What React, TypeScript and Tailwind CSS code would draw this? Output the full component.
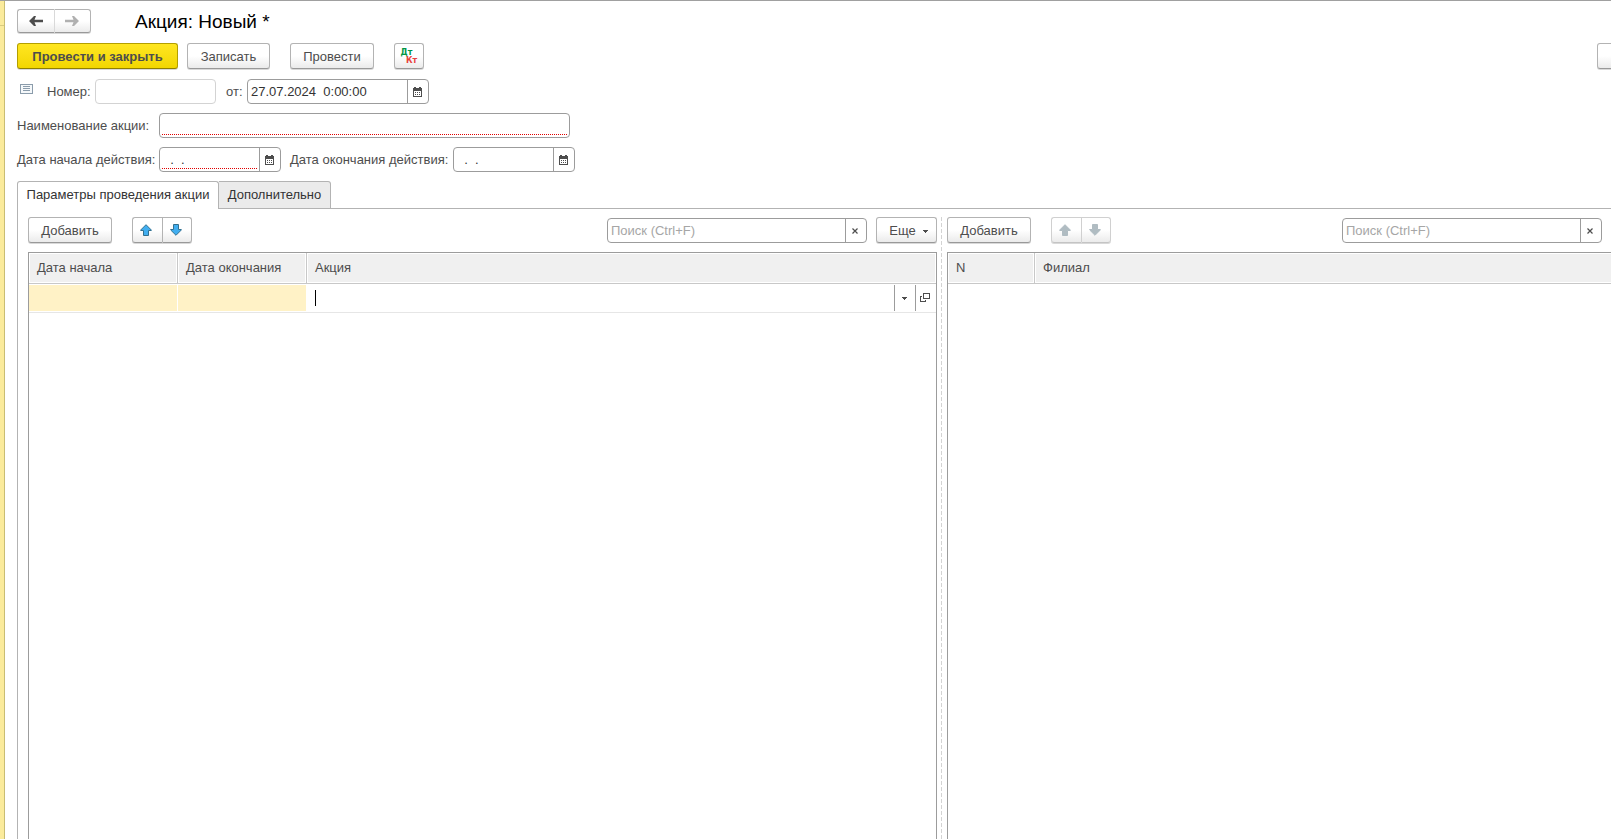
import type { JSX, ReactNode } from 'react'
import { useState } from 'react'
import clsx from 'clsx'

const BUTTON =
  'flex items-center justify-center border border-[#b3b3b3] border-b-[#999999] bg-linear-to-b from-white from-50% to-[#ebebeb] text-[#4d4d4d] shadow-[0_1px_0_#d9d9d9]'
const FIELD = 'flex h-[25px] rounded border border-[#9c9c9c] bg-white'
const FIELD_BUTTON = 'flex w-[21px] items-center justify-center border-l border-[#9c9c9c] pr-[2px]'

interface IconProps {
  className?: string
}

function NavArrow({ className }: IconProps): JSX.Element {
  return (
    <svg width="14" height="10" viewBox="0 0 14 10" className={className} fill="currentColor">
      <path d="M0 5 L5 0 H7 L5.5 3.7 H14 V6.3 H5.5 L7 10 H5 Z" />
    </svg>
  )
}

function MoveArrow({ className }: IconProps): JSX.Element {
  return (
    <svg width="12" height="12" viewBox="0 0 12 12" className={className} strokeWidth="1" strokeLinejoin="round">
      <path d="M6 0.7 L11.3 6 V6.5 H8.5 V11.5 H3.5 V6.5 H0.7 V6 Z" />
    </svg>
  )
}

function CalendarIcon(): JSX.Element {
  return (
    <svg width="9" height="10" viewBox="0 0 9 10" fill="#4d4d4d" shapeRendering="crispEdges">
      <path d="M1 0h2v1h3V0h2v1h1v9H0V1h1zM1 4v5h7V4z" fillRule="evenodd" />
      <path d="M2 5h1v1H2zM4 5h1v1H4zM6 5h1v1H6zM2 7h1v1H2zM4 7h1v1H4zM6 7h1v1H6z" />
    </svg>
  )
}

function ListIcon(): JSX.Element {
  return (
    <svg width="13" height="10" viewBox="0 0 13 10" shapeRendering="crispEdges">
      <rect x="0.5" y="0.5" width="12" height="9" fill="#f5f8fa" stroke="#8b9cab" />
      <path d="M3 2.5h7M3 4.5h7M3 6.5h7" stroke="#8b9cab" />
    </svg>
  )
}

function ClearIcon(): JSX.Element {
  return (
    <svg width="6" height="6" viewBox="0 0 6 6" stroke="#4d4d4d" strokeWidth="1.2">
      <path d="M0.5 0.5 L5.5 5.5 M5.5 0.5 L0.5 5.5" />
    </svg>
  )
}

function CaretIcon(): JSX.Element {
  return (
    <svg width="5" height="3" viewBox="0 0 5 3" fill="#4d4d4d" shapeRendering="crispEdges">
      <path d="M0 0h5v1H4v1H3v1H2V2H1V1H0z" />
    </svg>
  )
}

function OpenIcon(): JSX.Element {
  return (
    <svg width="10" height="10" viewBox="0 0 10 10" fill="none" stroke="#4d4d4d" shapeRendering="crispEdges">
      <path d="M3.5 0.5h6v5h-6z M2 3.5H0.5v5h5V7" />
    </svg>
  )
}

interface ButtonProps {
  children?: ReactNode
  className?: string
  label?: string
}

function Button({ children, className, label }: ButtonProps): JSX.Element {
  return (
    <button type="button" aria-label={label} className={clsx(BUTTON, 'h-[26px] shrink-0 rounded-[3px] pt-[2px]', className)}>
      {children}
    </button>
  )
}

interface DateFieldProps {
  id: string
  value: string
  className: string
  required?: boolean
}

function DateField({ id, value, className, required }: DateFieldProps): JSX.Element {
  const [text, setText] = useState(value)
  return (
    <div className={clsx(FIELD, className)}>
      <div className="min-w-0 flex-1 px-[2px]">
        <input
          id={id}
          value={text}
          onChange={(e) => { setText(e.target.value) }}
          className={clsx(
            'block h-[21px] w-full whitespace-pre px-px pt-[2px] text-[#333333] outline-none',
            required && 'border-b border-dotted border-[#e00000]'
          )}
        />
      </div>
      <button type="button" aria-label="Выбрать" className={FIELD_BUTTON}>
        <CalendarIcon />
      </button>
    </div>
  )
}

function SearchField(): JSX.Element {
  return (
    <div className={clsx(FIELD, 'w-[260px] shrink-0')}>
      <input
        aria-label="Поиск"
        placeholder="Поиск (Ctrl+F)"
        className="min-w-0 flex-1 px-[3px] outline-none placeholder:text-[#a6a6a6]"
      />
      <button type="button" aria-label="Очистить" className={FIELD_BUTTON}>
        <ClearIcon />
      </button>
    </div>
  )
}

function MoveButtons({ disabled = false }: { disabled?: boolean }): JSX.Element {
  const icon = disabled ? 'fill-[#b0bcc2] stroke-[#b0bcc2]' : 'fill-[#41aef0] stroke-[#32708f]'
  const border = disabled && 'border-[#d0d0d0] border-b-[#c4c4c4]'
  return (
    <div className="flex">
      <button type="button" aria-label="Вверх" disabled={disabled} className={clsx(BUTTON, 'h-[26px] w-[30px] rounded-l-[3px] border-r-0 pr-[3px]', border)}>
        <MoveArrow className={icon} />
      </button>
      <button type="button" aria-label="Вниз" disabled={disabled} className={clsx(BUTTON, 'h-[26px] w-[30px] rounded-r-[3px] pr-[3px]', border)}>
        <MoveArrow className={clsx(icon, 'rotate-180')} />
      </button>
    </div>
  )
}

function HeaderCell({ children, className }: { children: ReactNode; className?: string }): JSX.Element {
  return (
    <th
      scope="col"
      className={clsx(
        'h-[31px] border-b border-[#c8c8c8] bg-[#f0f0f0] px-[8px] text-left font-normal shadow-[inset_0_0_0_1px_#ffffff]',
        className
      )}
    >
      {children}
    </th>
  )
}

export default function App(): JSX.Element {
  return (
    <div className="flex h-screen overflow-hidden border-t border-[#a0a0a0] bg-white font-['Liberation_Sans',Arial,sans-serif] text-[13px] text-[#4d4d4d]">
      {/* Edge of the sections panel */}
      <div className="w-[5px] shrink-0 border-r border-[#c9bd73] bg-[#fbeb9c]">
        <div className="h-[25px] border-b border-[#d9cb80]" />
      </div>

      <main className="flex min-w-0 flex-1 flex-col pl-[12px] pt-[8px]">
        <header className="flex h-[24px] items-center">
          <button type="button" aria-label="Назад" className={clsx(BUTTON, 'h-[24px] w-[37px] rounded-l-[3px] border-r-0')}>
            <NavArrow />
          </button>
          <button type="button" aria-label="Вперед" className={clsx(BUTTON, 'h-[24px] w-[37px] rounded-r-[3px] border-l-[#d9d9d9] pr-[2px]')}>
            <NavArrow className="rotate-180 text-[#b0b0b0]" />
          </button>
          <h1 className="ml-[44px] pt-[2px] text-[19px] leading-[22px] text-black">Акция: Новый *</h1>
        </header>

        <div className="mt-[10px] flex">
          <button
            type="button"
            className="h-[26px] w-[161px] rounded-[3px] border border-[#b39f00] border-b-[#8f7f00] bg-linear-to-b from-[#ffe61f] to-[#f2d600] pt-[2px] font-bold text-[#4d4d4d] shadow-[0_1px_0_#d9d9d9]"
          >
            Провести и закрыть
          </button>
          <Button className="ml-[9px] w-[83px]">Записать</Button>
          <Button className="ml-[20px] w-[84px]">Провести</Button>
          <Button className="ml-[20px] w-[30px] flex-col font-['DejaVu_Sans',sans-serif] text-[8px] leading-[8px] font-bold">
            <span className="pr-[5px] text-[#009646]">Дт</span>
            <span className="pl-[5px] text-[#e8413c]">Кт</span>
          </Button>
          <Button label="Еще" className="-mr-[47px] ml-auto w-[61px]" />
        </div>

        <div className="mt-[10px] flex items-center">
          <div className="w-[30px] pb-[5px] pl-[3px]">
            <ListIcon />
          </div>
          <label htmlFor="number" className="w-[48px]">Номер:</label>
          <input id="number" className="h-[25px] w-[121px] rounded border border-[#d3d3d3] px-[3px] outline-none" />
          <label htmlFor="date" className="ml-[10px] w-[21px]">от:</label>
          <DateField id="date" value="27.07.2024  0:00:00" className="w-[182px]" />
        </div>

        <div className="mt-[9px] flex items-center">
          <label htmlFor="name" className="w-[142px]">Наименование акции:</label>
          <div className={clsx(FIELD, 'w-[411px] px-[2px]')}>
            <input id="name" className="h-[21px] w-full border-b border-dotted border-[#e00000] outline-none" />
          </div>
        </div>

        <div className="mt-[9px] flex items-center">
          <label htmlFor="start" className="w-[142px]">Дата начала действия:</label>
          <DateField id="start" value="  .  ." className="w-[122px]" required />
          <label htmlFor="end" className="ml-[9px] w-[163px]">Дата окончания действия:</label>
          <DateField id="end" value="  .  ." className="w-[122px]" />
        </div>

        <div role="tablist" className="mt-[9px] flex h-[28px] text-[#333333]">
          <button type="button" role="tab" aria-selected="true" className="w-[202px] rounded-t-[3px] border border-b-0 border-[#b3b3b3] pb-[2px]">
            Параметры проведения акции
          </button>
          <button type="button" role="tab" aria-selected="false" className="w-[112px] rounded-tr-[3px] border border-l-0 border-[#b3b3b3] bg-[#ebebeb]">
            Дополнительно
          </button>
          <div className="flex-1 border-b border-[#b3b3b3]" />
        </div>

        <div className="grid min-h-0 flex-1 grid-cols-[909fr_10px_664fr] border-l border-[#b3b3b3] pl-[10px] pt-[8px]">
          <section className="flex min-w-0 flex-col">
            <div className="flex">
              <Button className="mr-[20px] w-[84px]">Добавить</Button>
              <MoveButtons />
              <div className="ml-auto flex items-end gap-[9px]">
                <SearchField />
                <Button className="w-[61px] gap-[7px] pl-[4px]">
                  Еще
                  <CaretIcon />
                </Button>
              </div>
            </div>
            <div className="mt-[9px] flex-1 border border-b-0 border-[#9c9c9c]">
              <table className="w-full table-fixed border-separate border-spacing-0">
                <thead>
                  <tr>
                    <HeaderCell className="w-[149px] border-r">Дата начала</HeaderCell>
                    <HeaderCell className="w-[129px] border-r">Дата окончания</HeaderCell>
                    <HeaderCell>Акция</HeaderCell>
                  </tr>
                </thead>
                <tbody>
                  <tr>
                    <td className="border-b border-[#e6e6e6] bg-[#fff2c6] shadow-[inset_-1px_0_0_#ffffff,inset_0_1px_0_#ffffff,inset_0_-1px_0_#ffffff]" />
                    <td className="border-b border-[#e6e6e6] bg-[#fff2c6] shadow-[inset_-1px_0_0_#ffffff,inset_0_1px_0_#ffffff,inset_0_-1px_0_#ffffff]" />
                    <td className="border-b border-[#e6e6e6] p-0">
                      <div className="flex h-[28px] items-center py-px">
                        <div className="ml-[8px] h-[16px] w-px bg-black" />
                        <input aria-label="Акция" className="min-w-0 flex-1 outline-none" />
                        <button type="button" aria-label="Выбрать из списка" className={clsx(FIELD_BUTTON, 'h-[26px]')}>
                          <CaretIcon />
                        </button>
                        <button type="button" aria-label="Открыть" className={clsx(FIELD_BUTTON, 'h-[26px]')}>
                          <OpenIcon />
                        </button>
                      </div>
                    </td>
                  </tr>
                </tbody>
              </table>
            </div>
          </section>

          {/* Splitter */}
          <div className="ml-[4px] w-px bg-[repeating-linear-gradient(to_bottom,#d3d3d3_0px,#d3d3d3_4px,#ffffff_4px,#ffffff_6px)]" />

          <section className="flex min-w-0 flex-col">
            <div className="flex">
              <Button className="mr-[20px] w-[84px]">Добавить</Button>
              <MoveButtons disabled />
              <div className="ml-auto flex items-end pr-[9px]">
                <SearchField />
              </div>
            </div>
            <div className="-mr-px mt-[9px] flex-1 border-l border-t border-[#9c9c9c]">
              <table className="w-full table-fixed border-separate border-spacing-0">
                <thead>
                  <tr>
                    <HeaderCell className="w-[87px] border-r">N</HeaderCell>
                    <HeaderCell>Филиал</HeaderCell>
                  </tr>
                </thead>
              </table>
            </div>
          </section>
        </div>
      </main>
    </div>
  )
}
